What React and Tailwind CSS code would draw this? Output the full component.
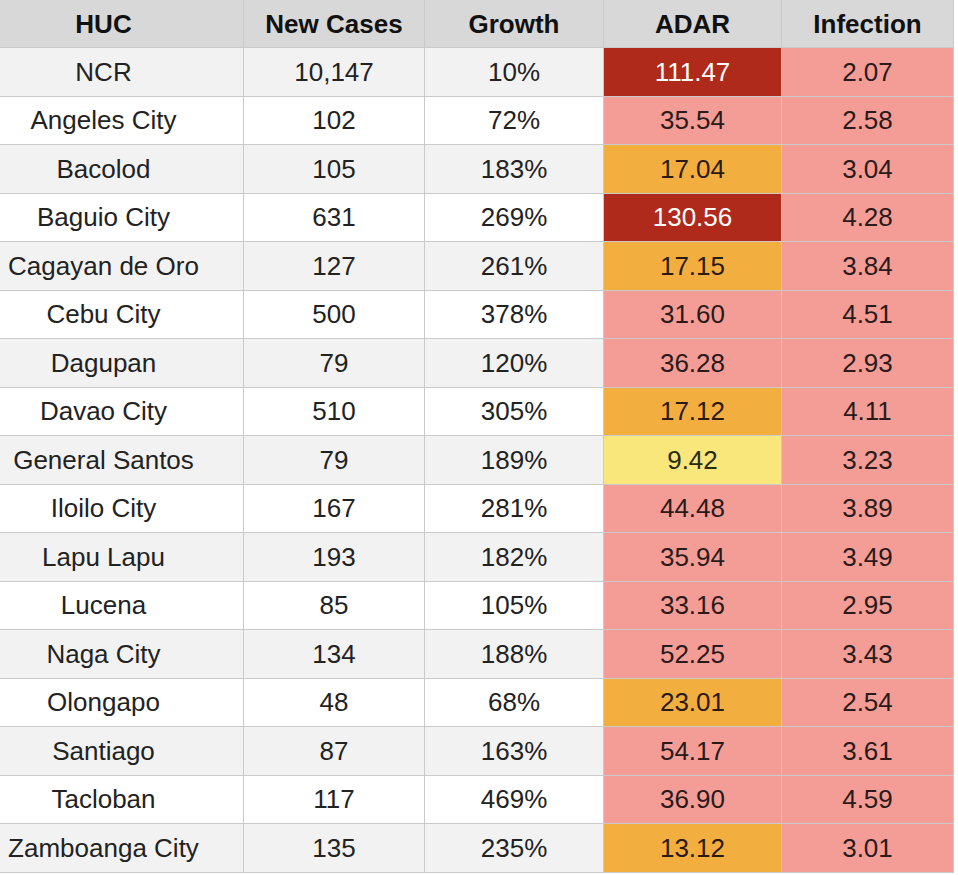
import React from 'react';

const rows = [
  ['NCR', '10,147', '10%', '111.47', 'dark', '2.07'],
  ['Angeles City', '102', '72%', '35.54', 'pink', '2.58'],
  ['Bacolod', '105', '183%', '17.04', 'orange', '3.04'],
  ['Baguio City', '631', '269%', '130.56', 'dark', '4.28'],
  ['Cagayan de Oro', '127', '261%', '17.15', 'orange', '3.84'],
  ['Cebu City', '500', '378%', '31.60', 'pink', '4.51'],
  ['Dagupan', '79', '120%', '36.28', 'pink', '2.93'],
  ['Davao City', '510', '305%', '17.12', 'orange', '4.11'],
  ['General Santos', '79', '189%', '9.42', 'yellow', '3.23'],
  ['Iloilo City', '167', '281%', '44.48', 'pink', '3.89'],
  ['Lapu Lapu', '193', '182%', '35.94', 'pink', '3.49'],
  ['Lucena', '85', '105%', '33.16', 'pink', '2.95'],
  ['Naga City', '134', '188%', '52.25', 'pink', '3.43'],
  ['Olongapo', '48', '68%', '23.01', 'orange', '2.54'],
  ['Santiago', '87', '163%', '54.17', 'pink', '3.61'],
  ['Tacloban', '117', '469%', '36.90', 'pink', '4.59'],
  ['Zamboanga City', '135', '235%', '13.12', 'orange', '3.01'],
];

const adarColors = {
  dark: 'bg-[#b02a1b] text-white',
  pink: 'bg-[#f39d96] text-[#2a1a1a]',
  orange: 'bg-[#f3ae40] text-[#2a1a10]',
  yellow: 'bg-[#f9e77c] text-[#2a2a10]',
};

const cell = 'flex items-center justify-center border-r border-b border-[#cacaca]';

const App = () => {
  return (
    <div
      className="w-[958px] h-[875px] bg-white overflow-hidden"
      style={{ fontFamily: '"Liberation Sans", Arial, sans-serif' }}
    >
      <div className="grid grid-cols-[244px_181px_179px_178px_172px] w-[954px] text-[26px] leading-none text-[#222]">
        {/* Header */}
        {['HUC', 'New Cases', 'Growth', 'ADAR', 'Infection'].map((h, i) => (
          <div
            key={h}
            className={`${cell} h-[48px] bg-[#d8d8d8] font-bold text-[#111] ${i === 0 ? 'pr-[36px]' : ''}`}
          >
            {h}
          </div>
        ))}

        {rows.map((r, idx) => {
          const rowBg = idx % 2 === 0 ? 'bg-[#f2f2f2]' : 'bg-white';
          return (
            <React.Fragment key={r[0]}>
              <div className={`${cell} h-[48.5px] ${rowBg} pr-[36px] whitespace-nowrap`}>{r[0]}</div>
              <div className={`${cell} h-[48.5px] ${rowBg}`}>{r[1]}</div>
              <div className={`${cell} h-[48.5px] ${rowBg}`}>{r[2]}</div>
              <div className={`${cell} h-[48.5px] ${adarColors[r[4]]}`}>{r[3]}</div>
              <div className={`${cell} h-[48.5px] bg-[#f39d96] text-[#2a1a1a]`}>{r[5]}</div>
            </React.Fragment>
          );
        })}
      </div>
    </div>
  );
};

export default App;
